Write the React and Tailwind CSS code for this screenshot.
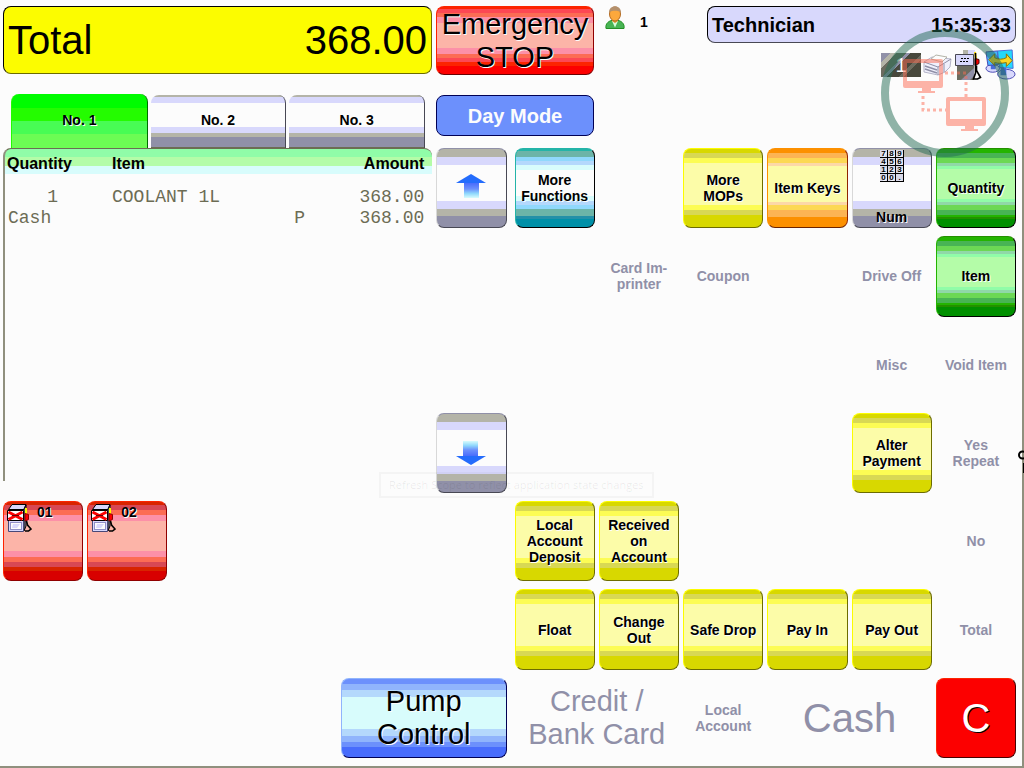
const bands = {
  yellow:
    'border-t-[#fcfc00] border-l-[#fcfc00] border-r-[#6c6c00] border-b-[#6c6c00] bg-[linear-gradient(#d8d800_4px,#d8d854_4px_9px,#fcfc54_9px_14px,#fcfca8_14px_56px,#fcfc54_56px_61px,#d8d854_61px_66px,#d8d800_66px)]',
  orange:
    'border-t-[#fc9000] border-l-[#fc9000] border-r-[#902400] border-b-[#6c2400] bg-[linear-gradient(#fc9000_4px,#fcb454_4px_9px,#fcd854_9px_14px,#fcd8a8_14px_17px,#fcfca8_17px_53px,#fcd8a8_53px_56px,#fcd854_56px_61px,#fcb454_61px_68px,#fc9000_68px)]',
  green:
    'border-t-[#249000] border-l-[#24b400] border-r-black border-b-black bg-[linear-gradient(#24b400_4px,#48b454_4px_9px,#6cd854_9px_14px,#90d8a8_14px_17px,#90fca8_17px_20px,#b4fca8_20px_50px,#90fca8_50px_53px,#90d8a8_53px_56px,#6cd854_56px_61px,#48b454_61px_66px,#24b400_66px_68px,#249000_68px_70px,#009000_70px)]',
  grey:
    'border-t-[#9090a8] border-l-[#d8d8d8] border-r-[#484854] border-b-[#484854] bg-[linear-gradient(#b4b4a8_8px,#d8d8fc_8px_16px,#fcfcfc_16px_52px,#d8d8fc_52px_60px,#b4b4a8_60px_67px,#9090a8_67px)]',
  teal:
    'border-t-[#24b4a8] border-l-[#24b4a8] border-r-black border-b-black bg-[linear-gradient(#24b4a8_2px,#6cb4a8_2px_8px,#90d8fc_8px_12px,#b4d8fc_12px_16px,#d8fcfc_16px_21px,#fcfcfc_21px_47px,#d8fcfc_47px_52px,#b4d8fc_52px_56px,#90d8fc_56px_60px,#6cb4a8_60px_67px,#2490a8_67px_70px,#0090a8_70px)]',
  red:
    'border-t-[#fc2400] border-l-[#fc2400] border-r-[#900000] border-b-[#900000] bg-[linear-gradient(#d82400_3px,#d84854_3px_8px,#fc6c54_8px_13px,#fc90a8_13px_19px,#fcb4a8_19px_49px,#fc90a8_49px_55px,#fc6c54_55px_60px,#d84854_60px_65px,#d82400_65px_69px,#d80000_69px)]',
  emergency:
    'border-t-[#fc2400] border-l-[#fc2400] border-r-[#900000] border-b-[#6c0000] bg-[linear-gradient(#fc2400_2px,#fc4854_2px_6px,#fc6c54_6px_10px,#fc90a8_10px_16px,#fcb4a8_16px_41px,#fc90a8_41px_47px,#fc6c54_47px_51px,#fc4854_51px_55px,#fc2400_55px_59px,#fc0000_59px)]',
  blue:
    'border-t-[#90b4fc] border-l-[#90b4fc] border-r-[#000054] border-b-[#000054] bg-[linear-gradient(#6c90fc_5px,#90b4fc_5px_11px,#b4d8fc_11px_18px,#d8fcfc_18px_50px,#b4d8fc_50px_57px,#90b4fc_57px_63px,#6c90fc_63px_68px,#486cfc_68px)]',
  clear: 'border-t-[#fc2400] border-l-[#fc2400] border-r-[#480000] border-b-[#480000] bg-[#fc0000]',
};

const lightShadow = '[text-shadow:1px_1px_0_#fcfcfc]';

function Key({ tone, className = '', text = 'text-sm leading-4 font-bold', children, ...rest }) {
  return (
    <button
      type="button"
      className={`flex min-w-0 items-center justify-center rounded-lg border px-1 text-center ${text} ${bands[tone]} ${
        tone === 'clear' ? 'text-white [text-shadow:1px_1px_0_#000]' : `text-black ${lightShadow}`
      } ${className}`}
      {...rest}
    >
      {children}
    </button>
  );
}

function Off({ className = '', text = 'text-sm leading-4 font-bold', children }) {
  return (
    <button
      type="button"
      disabled
      className={`flex min-w-0 items-center justify-center px-2 text-center text-[#9090a8] ${text} ${className}`}
    >
      {children}
    </button>
  );
}

function Arrow({ down }) {
  const id = down ? 'arrow-down' : 'arrow-up';
  return (
    <svg width="30" height="24" viewBox="0 0 30 24" className={down ? 'rotate-180' : ''} aria-hidden="true">
      <defs>
        <linearGradient id={id} x1="0" y1="0" x2="0" y2="1">
          <stop offset="0" stopColor="#486cfc" />
          <stop offset="0.4" stopColor="#6c90fc" />
          <stop offset="0.7" stopColor="#90d8fc" />
          <stop offset="1" stopColor="#d8fcfc" />
        </linearGradient>
      </defs>
      <path d="M8 9h15v15H8z" fill={`url(#${id})`} />
      <path d="M15 0 30 9H0z" fill="#246cfc" />
    </svg>
  );
}

function PumpIcon() {
  return (
    <svg width="25" height="28" viewBox="0 0 25 28" className="shrink-0" aria-hidden="true">
      <path d="M1.5 5.5 5 .5h14l-2 5z" fill="#d8d8fc" stroke="#000" />
      <path d="M17 5l2-4v21l-2 5z" fill="#9090a8" stroke="#000" />
      <path d="M1.5 16h15v11.5h-15z" fill="#d8d8fc" stroke="#484878" />
      <path d="M3 18h12v8H3z" fill="#9090c8" />
      <path d="M4 19h10v6H4z" fill="#fcfcfc" />
      <path d="M6 20h7l-3 4H5z" fill="#d8d8fc" />
      <path d="M.5 6.5h16v10H.5z" fill="#fcfcfc" stroke="#000" />
      <path d="M1.5 8l14 7.500M15.500 8l-14 7.500" stroke="#fc0000" strokeWidth="3" />
      <path d="M5 11.500h7" stroke="#6c0000" strokeWidth="1" />
      <path d="M19 4v6" stroke="#fcfc00" strokeWidth="2" />
      <path d="M18 9.500l3.500 1v5l-3.500 1.500z" fill="#fc0000" stroke="#900000" />
      <path d="M19.500 17l1 4 3.500 4-2.500 2H18" fill="none" stroke="#000" strokeWidth="1.6" />
    </svg>
  );
}

function PumpKey({ number }) {
  return (
    <button
      type="button"
      className={`row-start-5 flex items-start gap-[5px] rounded-lg border pt-0.5 pl-[3px] text-sm leading-4 font-bold text-black ${lightShadow} ${bands.red}`}
    >
      <PumpIcon />
      <span>{number}</span>
    </button>
  );
}

function Numpad() {
  const rows = ['789', '456', '123', '00.'];
  return (
    <svg width="24" height="32" viewBox="0 0 24 32" className="shrink-0" aria-hidden="true">
      <rect width="24" height="32" fill="#000" />
      {rows.map((row, y) =>
        [...row].map((digit, x) => (
          <g key={`${x}-${y}`}>
            <rect x={x * 8} y={y * 8} width="7" height="7" fill="#d8d8e8" />
            <text
              x={x * 8 + 3.5}
              y={y * 8 + 6.4}
              fontSize="8"
              fontWeight="bold"
              textAnchor="middle"
              fontFamily="Liberation Sans, sans-serif"
            >
              {digit}
            </text>
          </g>
        ))
      )}
    </svg>
  );
}

function UserIcon() {
  return (
    <svg width="20" height="24" viewBox="0 0 20 24" aria-hidden="true">
      <path d="M1 22.500c-1-5 3-8.500 9-8.500s10 3.500 9 8.500z" fill="#48b454" stroke="#249024" />
      <path d="M7 15l3 6.500 3-6.500z" fill="#d8fcd8" />
      <path d="M7 11h6v4l-3 2-3-2z" fill="#d89024" />
      <ellipse cx="10" cy="8" rx="5.500" ry="7" fill="#fca83c" stroke="#b46c24" />
      <path d="M4 6.500c0-8.500 12-8.500 12 0-2-2.500-10-2.500-12 0z" fill="#b4906c" />
    </svg>
  );
}

function PrinterIcon() {
  return (
    <svg width="30" height="22" viewBox="0 0 30 22" aria-hidden="true">
      <path d="M1 8 9 3l19 2-1 8-5 5-7 3L1 18z" fill="#f0f0fc" stroke="#b4b4c8" />
      <path d="M1 8l14 5 13-8M15 13v8M21 10v8" fill="none" stroke="#9090a8" />
      <path d="M8 5l5-4 11 2-5 5z" fill="#fcfcfc" stroke="#b4b4a8" />
      <path d="M2 12l12 4M2 15l12 4" stroke="#9090a8" strokeWidth="1.5" />
    </svg>
  );
}

function DispenserIcon() {
  return (
    <svg width="28" height="30" viewBox="0 0 28 30" aria-hidden="true">
      <path d="M8 0h12v5H8z" fill="#b4b4a8" />
      <path d="M13 0h7v5h-7z" fill="#d8d8fc" />
      <path d="M2 16h17v14H2z" fill="#6c6c60" />
      <path d="M6 30 19 18v8l-4 4z" fill="#9090a8" />
      <path d="M.5 4.500h18v11H.5z" fill="#d8d8fc" stroke="#484854" />
      <path d="M6 8.500h8M5 11.500h8" stroke="#000" strokeDasharray="2 1" />
      <path d="M20 2l1 7" stroke="#fcd800" strokeWidth="2" />
      <path d="M20 8.500l4 1v4l-4 2z" fill="#fc0000" stroke="#480000" />
      <path d="M21.500 15.500v5l4 7-3 1.500h-4l2-6V3" fill="none" stroke="#000" strokeWidth="1.6" />
    </svg>
  );
}

function LinkIcon() {
  return (
    <svg width="31" height="31" viewBox="0 0 32 32" aria-hidden="true">
      <ellipse cx="8" cy="20" rx="7" ry="4" fill="#d8d8fc" stroke="#4848b4" />
      <ellipse cx="22" cy="26" rx="9" ry="5" fill="#d8d8fc" stroke="#4848b4" />
      <path d="M6 14h5v7H6zM16 18h6v9h-6z" fill="#486cd8" />
      <path d="M1 3l12-1 1 14L3 17z" fill="#48b4fc" stroke="#4848b4" />
      <path d="M13 2l15-1 1 19-14-1z" fill="#24d8fc" stroke="#486cd8" />
      <path d="M4 11l6-6v4c4 2 8 2 12 0V5l6 7-6 6v-4c-5 1-8 1-12 0v3z" fill="#fcd824" stroke="#906c00" />
    </svg>
  );
}

function ScreenShareBadge() {
  return (
    <svg
      width="128"
      height="130"
      viewBox="0 0 128 130"
      className="pointer-events-none absolute top-7 right-[13px] opacity-50"
      aria-hidden="true"
    >
      <circle cx="64" cy="65" r="60" fill="none" stroke="#246c54" strokeWidth="8" />
      <g fill="#fc6c54">
        <path fillRule="evenodd" d="M24 31h36a2 2 0 0 1 2 2v25a2 2 0 0 1-2 2H50v3h4v2H37v-2h4v-3H24a2 2 0 0 1-2-2V33a2 2 0 0 1 2-2zm2 4v18h32V35z" />
        <path fillRule="evenodd" d="M67 69h36a2 2 0 0 1 2 2v25a2 2 0 0 1-2 2H93v3h4v2H80v-2h4v-3H67a2 2 0 0 1-2-2V71a2 2 0 0 1 2-2zm2 4v18h32V73z" />
      </g>
      <path d="M42 68v14h23M64 45h21v24" fill="none" stroke="#fc6c54" strokeWidth="3" strokeDasharray="3 3" />
    </svg>
  );
}

function Tab({ active, children }) {
  return (
    <button
      type="button"
      role="tab"
      aria-selected={Boolean(active)}
      className={
        active
          ? `flex-1 rounded-t-lg border-x border-l-[#24fc00] border-r-[#006c00] bg-[linear-gradient(#00fc00_14px,#24fc00_14px_27px,#48fc54_27px_40px,#6cfc54_40px)] pb-0.5 ${lightShadow}`
          : 'mt-px flex-1 rounded-t-lg border-r border-r-[#484854] bg-[linear-gradient(#b4b4a8_2px,#d8d8fc_2px_8px,#fcfcfc_8px_32px,#d8d8fc_32px_38px,#b4b4a8_38px_42px,#9090a8_42px_52px,#6c6c54_52px)] pb-1'
      }
    >
      {children}
    </button>
  );
}

export default function App() {
  return (
    <div className="relative flex min-h-screen flex-col border-r-2 border-b-2 border-[#90907e] bg-[#fcfcfc] pt-1.5 pr-1.5 pb-2 pl-[3px] font-['Liberation_Sans',Arial,sans-serif] text-black">
      <header className="flex shrink-0 gap-1">
        <div className="flex min-w-0 flex-[429] flex-col gap-5">
          <div className="flex h-17 items-center justify-between rounded-lg border border-[#6c6c00] border-t-black border-l-black bg-[#fcfc00] px-1 text-[40px] leading-10">
            <span>Total</span>
            <span>368.00</span>
          </div>
          <div role="tablist" className="flex h-[54px] gap-[3px] pr-[7px] pl-2 text-sm leading-4 font-bold">
            <Tab active>No. 1</Tab>
            <Tab>No. 2</Tab>
            <Tab>No. 3</Tab>
          </div>
        </div>
        <div className="flex min-w-0 flex-[158] flex-col gap-5">
          <Key tone="emergency" className="h-[69px]" text="text-[29px] leading-[33px]">
            Emergency
            <br />
            STOP
          </Key>
          <div className="flex h-[41px] items-center justify-center rounded-lg border border-[#000054] bg-[#6c90fc] text-xl font-bold text-[#fcfcfc]">
            Day Mode
          </div>
        </div>
        <div className="flex min-w-0 flex-[418] items-start">
          <div className="flex w-[109px] shrink-0 items-start gap-[15px] pl-[7px]">
            <UserIcon />
            <span className="pt-2 text-sm leading-4 font-bold">1</span>
          </div>
          <div className="flex min-w-0 flex-1 flex-col gap-1.5">
            <div className="flex h-[37px] items-center justify-between rounded-lg border border-[#484854] border-t-black border-l-black bg-[#d8d8fc] px-1 text-xl font-bold">
              <span>Technician</span>
              <time>15:35:33</time>
            </div>
            <div className="flex items-center justify-end gap-0.5">
              <span className="flex h-6 w-10 items-center justify-center bg-[linear-gradient(135deg,#9090a8_15%,#b4b4a8_15%_25%,#6c6c60_25%_40%,#9090a8_40%_46%,#48483c_46%_65%,#6c6c60_65%_72%,#48483c_72%)] text-xl leading-6 text-white">
                1
              </span>
              <PrinterIcon />
              <DispenserIcon />
              <LinkIcon />
            </div>
          </div>
        </div>
      </header>

      <main className="grid flex-1 grid-cols-[80fr_80fr_165fr_91fr_74fr_80fr_80fr_80fr_80fr_80fr_80fr] grid-rows-[repeat(7,minmax(80px,1fr))] gap-x-1 gap-y-2">
        <section className="col-span-4 col-start-1 row-span-4 row-start-1 mb-3 rounded-t-lg border-t border-l-2 border-t-[#6c6c54] border-l-[#90907e] bg-[linear-gradient(#90fca8_8px,#b4fca8_8px_17px,#d8fcfc_17px_25px,#fcfcfc_25px)]">
          <table className="w-full table-fixed text-left">
            <colgroup>
              <col className="w-[107px]" />
              <col />
              <col className="w-10" />
              <col className="w-[100px]" />
            </colgroup>
            <thead className="text-base leading-[30px] font-bold">
              <tr>
                <th className="pl-0.5">Quantity</th>
                <th colSpan="2">Item</th>
                <th className="pr-2 text-right">Amount</th>
              </tr>
            </thead>
            <tbody className="font-['Liberation_Mono','Courier_New',monospace] text-lg leading-[21px] text-[#6c6c54]">
              <tr>
                <td className="pt-2 pr-[54px] text-right">1</td>
                <td className="pt-2">COOLANT 1L</td>
                <td className="pt-2" />
                <td className="pt-2 pr-2 text-right">368.00</td>
              </tr>
              <tr>
                <td className="pl-[3px]">Cash</td>
                <td />
                <td className="pl-0.5">P</td>
                <td className="pr-2 text-right">368.00</td>
              </tr>
            </tbody>
          </table>
        </section>

        <Key tone="grey" className="col-start-5 row-start-1 mr-1 pb-1" aria-label="Scroll up">
          <Arrow />
        </Key>
        <Key tone="grey" className="col-start-5 row-start-4 mr-1" aria-label="Scroll down">
          <Arrow down />
        </Key>

        <Key tone="teal" className="col-start-6 row-start-1">More Functions</Key>
        <Key tone="yellow" className="col-start-8 row-start-1">More MOPs</Key>
        <Key tone="orange" className="col-start-9 row-start-1">Item Keys</Key>
        <Key tone="grey" className="col-start-10 row-start-1 flex-col justify-between! pt-px pb-0.5">
          <Numpad />
          Num
        </Key>
        <Key tone="green" className="col-start-11 row-start-1">Quantity</Key>

        <Off className="col-start-7 row-start-2">Card Im-printer</Off>
        <Off className="col-start-8 row-start-2">Coupon</Off>
        <Off className="col-start-10 row-start-2">Drive Off</Off>
        <Key tone="green" className="col-start-11 row-start-2">Item</Key>

        <Off className="col-start-10 row-start-3">Misc</Off>
        <Off className="col-start-11 row-start-3">Void Item</Off>

        <Key tone="yellow" className="col-start-10 row-start-4">Alter Payment</Key>
        <Off className="col-start-11 row-start-4">Yes Repeat</Off>

        <PumpKey number="01" />
        <PumpKey number="02" />
        <Key tone="yellow" className="col-start-6 row-start-5">Local Account Deposit</Key>
        <Key tone="yellow" className="col-start-7 row-start-5">Received on Account</Key>
        <Off className="col-start-11 row-start-5">No</Off>

        <Key tone="yellow" className="col-start-6 row-start-6">Float</Key>
        <Key tone="yellow" className="col-start-7 row-start-6">Change Out</Key>
        <Key tone="yellow" className="col-start-8 row-start-6">Safe Drop</Key>
        <Key tone="yellow" className="col-start-9 row-start-6">Pay In</Key>
        <Key tone="yellow" className="col-start-10 row-start-6">Pay Out</Key>
        <Off className="col-start-11 row-start-6">Total</Off>

        <Key tone="blue" className="col-span-2 col-start-4 row-start-7 mr-1" text="text-[29px] leading-[33px]">
          Pump
          <br />
          Control
        </Key>
        <Off className="col-span-2 col-start-6 row-start-7" text="text-[29px] leading-[33px]">
          Credit / Bank Card
        </Off>
        <Off className="col-start-8 row-start-7">Local Account</Off>
        <Off className="col-span-2 col-start-9 row-start-7" text="text-[40px] leading-10">Cash</Off>
        <Key tone="clear" className="col-start-11 row-start-7" text="text-[40px] leading-10">C</Key>
      </main>

      <ScreenShareBadge />
      <div className="pointer-events-none absolute top-[472px] left-[379px] border-2 border-black/3 px-2 font-['Open_Sans',sans-serif] text-[11px] leading-[22px] whitespace-nowrap text-black/8">
        Refresh Scope to reflect application state changes
      </div>
      <svg width="6" height="24" viewBox="0 0 6 24" className="pointer-events-none absolute top-[450px] -right-0.5" aria-hidden="true">
        <circle cx="4.5" cy="5" r="3.5" fill="none" stroke="#000" strokeWidth="2" />
        <path d="M5.5 13v10" stroke="#000" />
      </svg>
    </div>
  );
}
